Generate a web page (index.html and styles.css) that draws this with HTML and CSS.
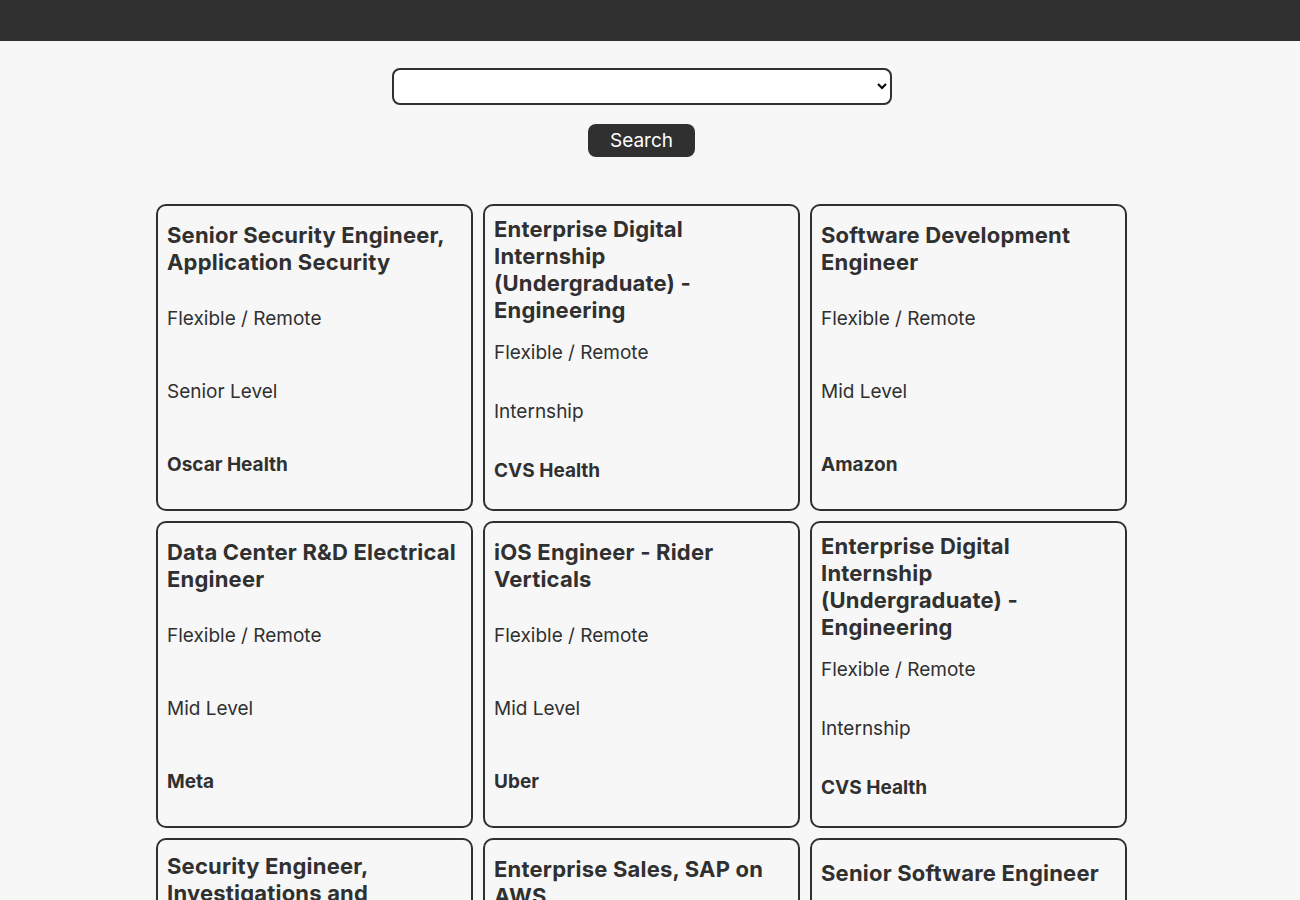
FILE: index.html
```html
<!DOCTYPE html>
<html lang="en">
<head>
<meta charset="utf-8">
<title>Jobs</title>
<link rel="stylesheet" href="styles.css">
</head>
<body>
<header class="topbar"></header>
<main class="page">
  <form class="search">
    <select class="search-select"><option></option></select>
    <button class="search-btn" type="button">Search</button>
  </form>
  <section class="grid">
    <article class="card">
      <h2 class="card-title">Senior Security Engineer, Application Security</h2>
      <p class="card-text">Flexible / Remote</p>
      <p class="card-text">Senior Level</p>
      <p class="card-text card-company">Oscar Health</p>
    </article>
    <article class="card">
      <h2 class="card-title">Enterprise Digital Internship (Undergraduate) - Engineering</h2>
      <p class="card-text">Flexible / Remote</p>
      <p class="card-text">Internship</p>
      <p class="card-text card-company">CVS Health</p>
    </article>
    <article class="card">
      <h2 class="card-title">Software Development Engineer</h2>
      <p class="card-text">Flexible / Remote</p>
      <p class="card-text">Mid Level</p>
      <p class="card-text card-company">Amazon</p>
    </article>
    <article class="card">
      <h2 class="card-title">Data Center R&amp;D Electrical Engineer</h2>
      <p class="card-text">Flexible / Remote</p>
      <p class="card-text">Mid Level</p>
      <p class="card-text card-company">Meta</p>
    </article>
    <article class="card">
      <h2 class="card-title">iOS Engineer - Rider Verticals</h2>
      <p class="card-text">Flexible / Remote</p>
      <p class="card-text">Mid Level</p>
      <p class="card-text card-company">Uber</p>
    </article>
    <article class="card">
      <h2 class="card-title">Enterprise Digital Internship (Undergraduate) - Engineering</h2>
      <p class="card-text">Flexible / Remote</p>
      <p class="card-text">Internship</p>
      <p class="card-text card-company">CVS Health</p>
    </article>
    <article class="card">
      <h2 class="card-title">Security Engineer, Investigations and Response</h2>
      <p class="card-text">Flexible / Remote</p>
      <p class="card-text">Mid Level</p>
      <p class="card-text card-company">Meta</p>
    </article>
    <article class="card">
      <h2 class="card-title">Enterprise Sales, SAP on AWS</h2>
      <p class="card-text">Flexible / Remote</p>
      <p class="card-text">Mid Level</p>
      <p class="card-text card-company">Amazon</p>
    </article>
    <article class="card">
      <h2 class="card-title">Senior Software Engineer</h2>
      <p class="card-text">Flexible / Remote</p>
      <p class="card-text">Senior Level</p>
      <p class="card-text card-company">Uber</p>
    </article>
  </section>
</main>
</body>
</html>
```
FILE: styles.css
```css
body {
  margin: 0;
  background: #f7f7f7;
  color: #303030;
  font-family: "Inter", "Liberation Sans", sans-serif;
}

.topbar {
  height: 41px;
  background: #303030;
}

.page {
  width: 1283px;
}

.search {
  display: flex;
  flex-direction: column;
  align-items: center;
  gap: 19px;
  padding-top: 27px;
  margin: 0;
}

.search-select {
  width: 500px;
  height: 37px;
  box-sizing: border-box;
  border: 2px solid #303030;
  border-radius: 8px;
  background: #fff;
}

.search-btn {
  width: 107px;
  height: 33px;
  border: none;
  border-radius: 8px;
  background: #303030;
  color: #fff;
  font-family: inherit;
  font-size: 19px;
}

.grid {
  width: 971px;
  margin: 47px auto 0;
  display: grid;
  grid-template-columns: repeat(3, 1fr);
  gap: 10px;
}

.card {
  height: 307px;
  box-sizing: border-box;
  border: 2px solid #303030;
  border-radius: 10px;
  padding: 8px 11px 8px 9px;
  display: flex;
  flex-direction: column;
  justify-content: space-around;
}

.card-title {
  margin: 0 0 -2px;
  font-size: 22px;
  line-height: 27px;
  font-weight: 700;
  letter-spacing: 0.2px;
}

.card-text {
  margin: 16px 0;
  font-size: 19px;
  line-height: 24px;
  font-weight: 400;
}

.card-company {
  font-weight: 700;
}
```
